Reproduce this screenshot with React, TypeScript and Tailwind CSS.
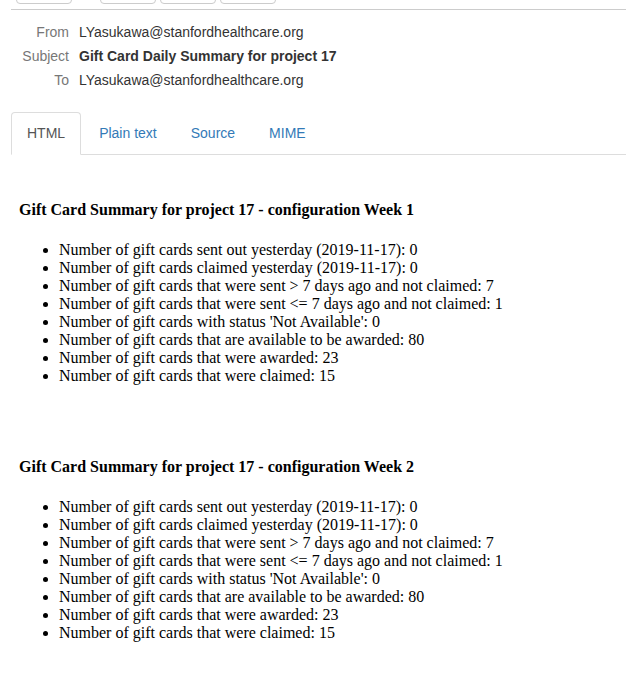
import React from "react"

const items = [
  "Number of gift cards sent out yesterday (2019-11-17): 0",
  "Number of gift cards claimed yesterday (2019-11-17): 0",
  "Number of gift cards that were sent > 7 days ago and not claimed: 7",
  "Number of gift cards that were sent <= 7 days ago and not claimed: 1",
  "Number of gift cards with status 'Not Available': 0",
  "Number of gift cards that are available to be awarded: 80",
  "Number of gift cards that were awarded: 23",
  "Number of gift cards that were claimed: 15",
]

const headers = [
  { label: "From", value: "LYasukawa@stanfordhealthcare.org", bold: false },
  { label: "Subject", value: "Gift Card Daily Summary for project 17", bold: true },
  { label: "To", value: "LYasukawa@stanfordhealthcare.org", bold: false },
]

const tabs = ["HTML", "Plain text", "Source", "MIME"]

function Summary({ week, first }: { week: number; first?: boolean }) {
  return (
    <div className={first ? "" : "mt-[73px]"}>
      <h4 className="text-[16px] font-bold leading-[18px]">
        Gift Card Summary for project 17 - configuration Week {week}
      </h4>
      <ul className="mt-[22px] list-disc pl-[40px] text-[16px] leading-[18px]">
        {items.map((t) => (
          <li key={t}>{t}</li>
        ))}
      </ul>
    </div>
  )
}

export default function App() {
  return (
    <div className="h-[700px] w-[626px] overflow-hidden bg-white pl-[11px]">
      {/* toolbar buttons, scrolled mostly out of view */}
      <div className="-mt-[27px] flex pl-[5px]">
        <div className="h-[31px] w-[56px] rounded-[4px] border border-[#ccc] bg-white" />
        <div className="ml-[28px] flex gap-[4px]">
          <div className="h-[31px] w-[56px] rounded-[4px] border border-[#ccc] bg-white" />
          <div className="h-[31px] w-[56px] rounded-[4px] border border-[#ccc] bg-white" />
          <div className="h-[31px] w-[56px] rounded-[4px] border border-[#ccc] bg-white" />
        </div>
      </div>
      <div className="mt-[5px] border-t border-[#ccc]" />

      <div className="mt-[10px] font-['Liberation_Sans',Arial,sans-serif] text-[14px] leading-[24px]">
        {headers.map((h) => (
          <div key={h.label} className="flex">
            <div className="w-[58px] text-right text-[#777]">{h.label}</div>
            <div className={"ml-[10px] text-[#333] " + (h.bold ? "font-bold" : "")}>{h.value}</div>
          </div>
        ))}
      </div>

      <div className="mt-[20px] flex border-b border-[#ddd] font-['Liberation_Sans',Arial,sans-serif] text-[14px] leading-[20px]">
        {tabs.map((t, i) => (
          <div
            key={t}
            className={
              i === 0
                ? "-mb-px mr-[2px] rounded-t-[4px] border border-[#ddd] border-b-white bg-white px-[15px] py-[10px] text-[#555]"
                : "mr-[2px] rounded-t-[4px] border border-transparent px-[15px] py-[10px] text-[#337ab7]"
            }
          >
            {t}
          </div>
        ))}
      </div>

      <div className="pl-[8px] pt-[46px] font-['Liberation_Serif','Times_New_Roman',serif] text-black">
        <Summary week={1} first />
        <Summary week={2} />
      </div>
    </div>
  )
}
